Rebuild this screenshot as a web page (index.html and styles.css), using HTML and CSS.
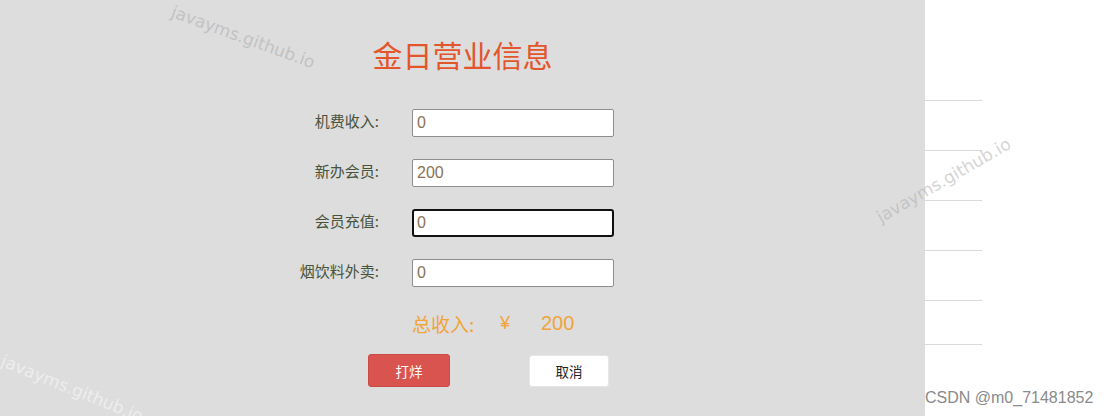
FILE: index.html
```html
<!DOCTYPE html>
<html lang="zh">
<head>
<meta charset="utf-8">
<title>金日营业信息</title>
<link rel="stylesheet" href="styles.css">
</head>
<body>
<div class="page">
  <div class="panel">
    <h1 class="title">金日营业信息</h1>
    <div class="form">
      <div class="row"><label class="label">机费收入:</label><input class="field" value="0"></div>
      <div class="row"><label class="label">新办会员:</label><input class="field" value="200"></div>
      <div class="row"><label class="label">会员充值:</label><input class="field field-focus" value="0"></div>
      <div class="row"><label class="label">烟饮料外卖:</label><input class="field" value="0"></div>
      <div class="total"><span class="total-label">总收入:</span><span class="yen">¥</span><span class="total-value">200</span></div>
    </div>
    <div class="actions">
      <button class="btn btn-close">打烊</button>
      <button class="btn btn-cancel">取消</button>
    </div>
    <div class="wm wm-top">javayms.github.io</div>
    <div class="wm wm-bottom">javayms.github.io</div>
  </div>
  <div class="side">
    <div class="side-row"></div>
    <div class="side-row"></div>
    <div class="side-row"></div>
    <div class="side-row"></div>
    <div class="side-row"></div>
    <div class="side-row side-row-last"></div>
    <div class="wm wm-right">javayms.github.io</div>
    <div class="credit">CSDN @m0_71481852</div>
  </div>
</div>
</body>
</html>
```

FILE: styles.css
```css
html, body {
  margin: 0;
  padding: 0;
  width: 1113px;
  height: 416px;
  overflow: hidden;
  font-family: "Liberation Sans", "Noto Sans CJK SC", sans-serif;
}
.page {
  display: flex;
  width: 1113px;
  height: 416px;
  position: relative;
}
.panel {
  width: 925px;
  height: 416px;
  background: #dddddd;
  padding-top: 34px;
  box-sizing: border-box;
}
.title {
  margin: 0;
  text-align: center;
  font-family: "Noto Sans CJK SC", sans-serif;
  font-weight: 400;
  font-size: 30px;
  line-height: 40px;
  color: #e3552b;
}
.form {
  margin-top: 24px;
  padding-left: 280px;
}
.row {
  display: flex;
  align-items: center;
  height: 50px;
}
.label {
  width: 100px;
  text-align: right;
  padding-right: 1px;
  padding-bottom: 5px;
  box-sizing: border-box;
  font-family: "Noto Sans CJK SC", sans-serif;
  font-size: 15px;
  color: #46533c;
  margin-right: 32px;
}
.field {
  width: 202px;
  height: 28px;
  box-sizing: border-box;
  border: 1px solid #8e8e8e;
  border-radius: 2px;
  background: #ffffff;
  padding: 0 4px;
  font-family: "Liberation Sans", sans-serif;
  font-size: 16px;
  color: #8a7253;
  outline: none;
}
.field-focus {
  border: 2px solid #111111;
  border-radius: 3px;
  padding: 0 3px;
}
.total {
  display: flex;
  align-items: center;
  height: 50px;
  padding-left: 132px;
  color: #f0a43a;
  font-size: 19px;
}
.total-label {
  font-family: "Noto Sans CJK SC", sans-serif;
  width: 88px;
}
.yen {
  width: 41px;
  font-size: 18px;
}
.total-value {
  font-size: 20px;
}
.actions {
  display: flex;
  gap: 79px;
  margin-top: 6px;
  padding-left: 368px;
}
.btn {
  width: 82px;
  height: 33px;
  border-radius: 3px;
  font-family: "Noto Sans CJK SC", sans-serif;
  font-size: 13.5px;
  padding: 0;
  cursor: pointer;
}
.btn-close {
  background: #d9534f;
  border: 1px solid #c74a46;
  color: #ffffff;
}
.btn-cancel {
  width: 80px;
  height: 32px;
  margin-top: 1px;
  background: #ffffff;
  border: 1px solid #e6e6e6;
  color: #222222;
}
.side {
  flex: 1;
  background: #ffffff;
  padding-top: 51px;
  box-sizing: border-box;
}
.side-row {
  width: 57px;
  height: 50px;
  box-sizing: border-box;
  border-bottom: 1px solid #d9d9d9;
}
.side-row-last {
  height: 44px;
}
.wm {
  position: absolute;
  font-family: "DejaVu Sans", sans-serif;
  font-size: 17px;
  white-space: nowrap;
  transform-origin: left center;
  pointer-events: none;
}
.wm-top {
  left: 172px;
  top: 1px;
  color: rgba(175, 175, 175, 0.6);
  transform: rotate(20deg);
}
.wm-bottom {
  left: 2px;
  top: 350px;
  color: rgba(245, 245, 245, 0.7);
  transform: rotate(22deg);
}
.wm-right {
  left: 878px;
  top: 208px;
  color: rgba(175, 175, 175, 0.55);
  transform: rotate(-30deg);
}
.credit {
  position: absolute;
  left: 925px;
  top: 389px;
  font-family: "Liberation Sans", sans-serif;
  font-size: 16px;
  color: #8a8a8a;
  white-space: nowrap;
}
```
